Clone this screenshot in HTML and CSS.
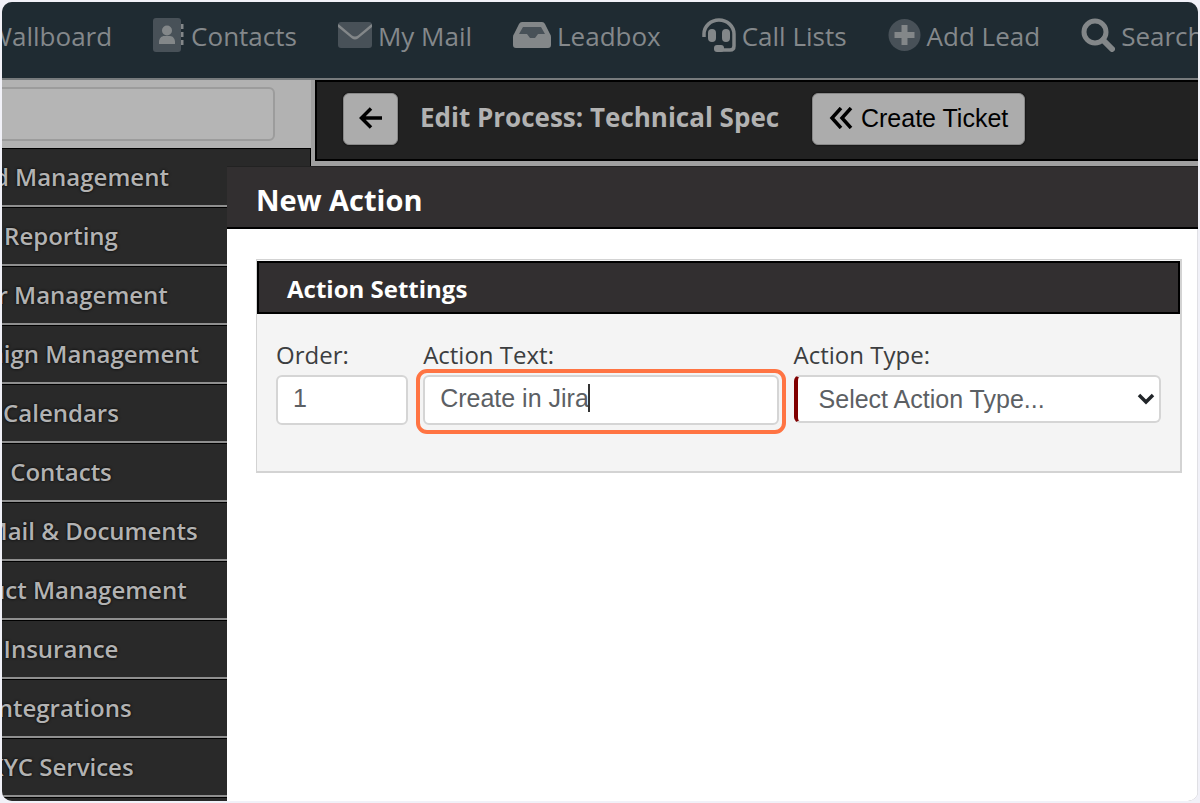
FILE: index.html
```html
<!DOCTYPE html>
<html lang="en">
<head>
<meta charset="utf-8">
<title>Edit Process: Technical Spec</title>
<link rel="stylesheet" href="styles.css">
</head>
<body>
<div class="app">
  <nav class="topnav">
    <a class="nav-item" href="#">Wallboard</a>
    <a class="nav-item" href="#"><svg class="icon" width="32" height="34" viewBox="0 0 32 34" aria-hidden="true"><rect x="0" y="0" width="28" height="34" rx="3" fill="#485158"/><circle cx="14" cy="12.500" r="5" fill="#838789"/><path d="M6 26v-2c0-4 3-6 5-6h6c3 0 5 3 5 6v2z" fill="#838789"/><path d="M28 6h2.500v5H28zM28 14h2.500v5H28zM28 22h2.500v5H28z" fill="#838789"/></svg>Contacts</a>
    <a class="nav-item" href="#"><svg class="icon" width="34" height="34" viewBox="0 0 34 34" aria-hidden="true"><rect x="0" y="4" width="34" height="26" rx="3" fill="#485158"/><path d="M0 9V7q0-1 1-.500l13 11q3 2 6 0l13-11q1-.500 1 .500v2L20 20.500q-3 2-6 0z" fill="#838789"/></svg>My Mail</a>
    <a class="nav-item" href="#"><svg class="icon" width="38" height="34" viewBox="0 0 38 34" aria-hidden="true"><path d="M7 8h24l4 10h-9l-3 3h-8l-3-3H3z" fill="#485158"/><path fill-rule="evenodd" d="M9 4h20q2 0 3 2l5 10q1 1 1 3v8q0 3-3 3H3q-3 0-3-3v-8q0-2 1-3L6 6q1-2 3-2zM10 9L6 16h8l3 4h5l3-4h7L28 9z" fill="#838789"/></svg>Leadbox</a>
    <a class="nav-item" href="#"><svg class="icon" width="34" height="34" viewBox="0 0 34 34" aria-hidden="true"><path d="M2 19v-3a15 14 0 0 1 30 0v12q0 4-4 4h-9" fill="none" stroke="#838789" stroke-width="3.500"/><rect x="6" y="11" width="8" height="13" rx="4" fill="#838789"/><rect x="20" y="11" width="8" height="13" rx="4" fill="#838789"/><rect x="12" y="27" width="10" height="7" rx="3" fill="#838789"/></svg>Call Lists</a>
    <a class="nav-item" href="#"><svg class="icon" width="33" height="34" viewBox="0 0 33 34" aria-hidden="true"><circle cx="16.500" cy="17" r="16" fill="#485158"/><path d="M13.500 7h6v7h7v6h-7v7h-6v-7h-7v-6h7z" fill="#838789"/></svg>Add Lead</a>
    <a class="nav-item" href="#"><svg class="icon" width="34" height="34" viewBox="0 0 34 34" aria-hidden="true"><circle cx="14" cy="14" r="11" fill="none" stroke="#838789" stroke-width="5"/><path d="M22 22l9 9" stroke="#838789" stroke-width="6" stroke-linecap="round"/></svg>Search</a>
  </nav>
  <div class="workspace">
    <aside class="sidebar">
      <div class="sidebar-search"><input class="search-box" type="text" aria-label="Search menu"></div>
      <a class="menu-item" href="#">Lead Management</a>
      <a class="menu-item" href="#">Reporting</a>
      <a class="menu-item" href="#">User Management</a>
      <a class="menu-item" href="#">Campaign Management</a>
      <a class="menu-item" href="#">Calendars</a>
      <a class="menu-item" href="#">Contacts</a>
      <a class="menu-item" href="#">SMS, Mail &amp; Documents</a>
      <a class="menu-item" href="#">Product Management</a>
      <a class="menu-item" href="#">Insurance</a>
      <a class="menu-item" href="#">Integrations</a>
      <a class="menu-item" href="#">KYC Services</a>
      <div class="menu-item"></div>
    </aside>
    <main class="content">
      <header class="process-bar">
        <button class="btn btn-back" type="button" aria-label="Back"><svg width="24" height="22" viewBox="0 0 24 22" aria-hidden="true"><path d="M12 1.500L2.500 11l9.500 9.500M3 11h20" fill="none" stroke="#000" stroke-width="3.500"/></svg></button>
        <h1 class="process-title">Edit Process: Technical Spec</h1>
        <button class="btn btn-ticket" type="button"><svg width="24" height="22" viewBox="0 0 24 22" aria-hidden="true"><path d="M12 1L3 11l9 10M22 1l-9 10 9 10" fill="none" stroke="#000" stroke-width="3.500"/></svg>Create Ticket</button>
      </header>
    </main>
  </div>
  <section class="modal" role="dialog" aria-labelledby="modal-title">
    <h2 class="modal-title" id="modal-title">New Action</h2>
    <div class="modal-body">
      <div class="panel">
        <h3 class="panel-title">Action Settings</h3>
        <form class="fields">
          <div class="field">
            <label for="order">Order:</label>
            <input class="control" id="order" type="text" value="1">
          </div>
          <div class="field">
            <label for="action-text">Action Text:</label>
            <div class="highlighted">
              <input class="control" id="action-text" type="text" value="Create in Jira">
              <span class="caret"></span>
              <span class="ring"></span>
            </div>
          </div>
          <div class="field">
            <label for="action-type">Action Type:</label>
            <div class="select-wrap">
              <select class="control select" id="action-type"><option>Select Action Type...</option></select>
              <svg class="chevron" width="18" height="12" viewBox="0 0 18 12" aria-hidden="true"><path d="M2 2l7 7 7-7" fill="none" stroke="#212529" stroke-width="3.500"/></svg>
            </div>
          </div>
        </form>
      </div>
    </div>
  </section>
</div>
</body>
</html>
```
FILE: styles.css
```css
* { box-sizing: border-box; }

body {
  margin: 0;
  padding: 2px;
  height: 100vh;
  background: #f1f1f8;
  font-family: "Open Sans", "Noto Sans", sans-serif;
}

.app {
  position: relative;
  display: flex;
  flex-direction: column;
  height: 100%;
  overflow: hidden;
  border-radius: 10px;
  background: #a0a0a0;
}

.topnav {
  display: flex;
  flex: none;
  gap: 41px;
  height: 78px;
  margin-left: -14px;
  padding-bottom: 8px;
  background: #1f2b32;
  border-bottom: 2px solid #777b7d;
}

.nav-item {
  display: flex;
  flex: none;
  align-items: center;
  gap: 6px;
  color: #84888b;
  font-size: 26px;
  line-height: 36px;
  text-decoration: none;
  white-space: nowrap;
}

.icon { flex: none; margin-bottom: 3px; }

.workspace { display: flex; flex: 1; min-height: 0; }

.sidebar {
  flex: none;
  width: 500px;
  margin-left: -191px;
}

.sidebar-search {
  height: 68px;
  padding: 7px 36px 7px 0;
  background: #b2b2b2;
}

.search-box {
  width: 100%;
  height: 54px;
  border: 2px solid #9c9c9c;
  border-radius: 6px;
  background: #b5b5b5;
}

.menu-item {
  display: block;
  height: 59px;
  border: 1px solid #000;
  border-bottom: 2px solid #8f8f8f;
  background: #292929;
  color: #b2b2b2;
  font-size: 24px;
  font-weight: 600;
  line-height: 56px;
  text-align: center;
  text-decoration: none;
  text-shadow: 0 0 3px #000;
  white-space: nowrap;
}

.content { flex: 1; min-width: 0; margin-left: 4px; }

.process-bar {
  display: flex;
  align-items: center;
  height: 81px;
  padding-left: 26px;
  padding-bottom: 3px;
  border: 2px solid #000;
  border-right: 0;
  background: #222;
}

.btn {
  display: flex;
  align-items: center;
  justify-content: center;
  gap: 8px;
  height: 52px;
  padding: 0 0 2px;
  border: 1px solid #888;
  border-radius: 6px;
  background: #acacac;
  box-shadow: 0 0 2px #000;
  color: #000;
  font-family: "Liberation Sans", Arial, sans-serif;
  font-size: 25px;
}

.btn-back { width: 55px; }
.btn-ticket { width: 213px; }

.process-title {
  margin: 0 33px 0 22px;
  padding-bottom: 4px;
  color: #b2b2b2;
  font-size: 26px;
  font-weight: 700;
  line-height: 36px;
  white-space: nowrap;
}

.modal {
  position: absolute;
  top: 164px;
  right: 0;
  bottom: 0;
  left: 225px;
  display: flex;
  flex-direction: column;
  background: #fff;
}

.modal-title {
  margin: 0;
  padding: 15px 29px 9px;
  border-top: 1px solid #222;
  border-bottom: 2px solid #000;
  background: #322f30;
  color: #fff;
  font-size: 29px;
  font-weight: 700;
  line-height: 36px;
}

.modal-body {
  flex: 1;
  padding: 30px 15px 0 29px;
  border-right: 1px solid #e0e0e4;
}

.panel {
  padding: 1px 0 38px;
  border: 2px solid #d3d3d3;
  border-width: 1px 2px 2px 1px;
  background: #f4f4f4;
}

.panel-title {
  margin: 0;
  padding: 9px 28px 6px;
  border: 2px solid #000;
  background: #322f30;
  color: #fff;
  font-size: 24px;
  font-weight: 700;
  line-height: 34px;
}

.fields {
  display: grid;
  grid-template-columns: 132fr 355fr 367fr;
  gap: 15px;
  padding: 23px 19px 8px;
}

.field { display: flex; flex-direction: column; gap: 2px; min-width: 0; }

.field label {
  color: #3c3e40;
  font-size: 24px;
  line-height: 36px;
}

.control {
  display: block;
  width: 100%;
  height: 50px;
  padding: 0 15px 4px;
  border: 2px solid #d5d5d5;
  border-radius: 6px;
  outline: 0;
  background: #fff;
  color: #5c6064;
  font-family: "Liberation Sans", Arial, sans-serif;
  font-size: 25px;
}

.select {
  height: 48px;
  padding: 0 21px;
  border-left: 4px solid #800000;
  appearance: none;
}

.highlighted, .select-wrap { position: relative; }

.ring {
  position: absolute;
  inset: -6px -7px -9px;
  border: 4px solid #ff7443;
  border-radius: 11px;
  pointer-events: none;
}

.caret {
  position: absolute;
  top: 9px;
  left: 165px;
  width: 2px;
  height: 28px;
  background: #333;
}

.chevron {
  position: absolute;
  top: 18px;
  right: 6px;
  pointer-events: none;
}
```
